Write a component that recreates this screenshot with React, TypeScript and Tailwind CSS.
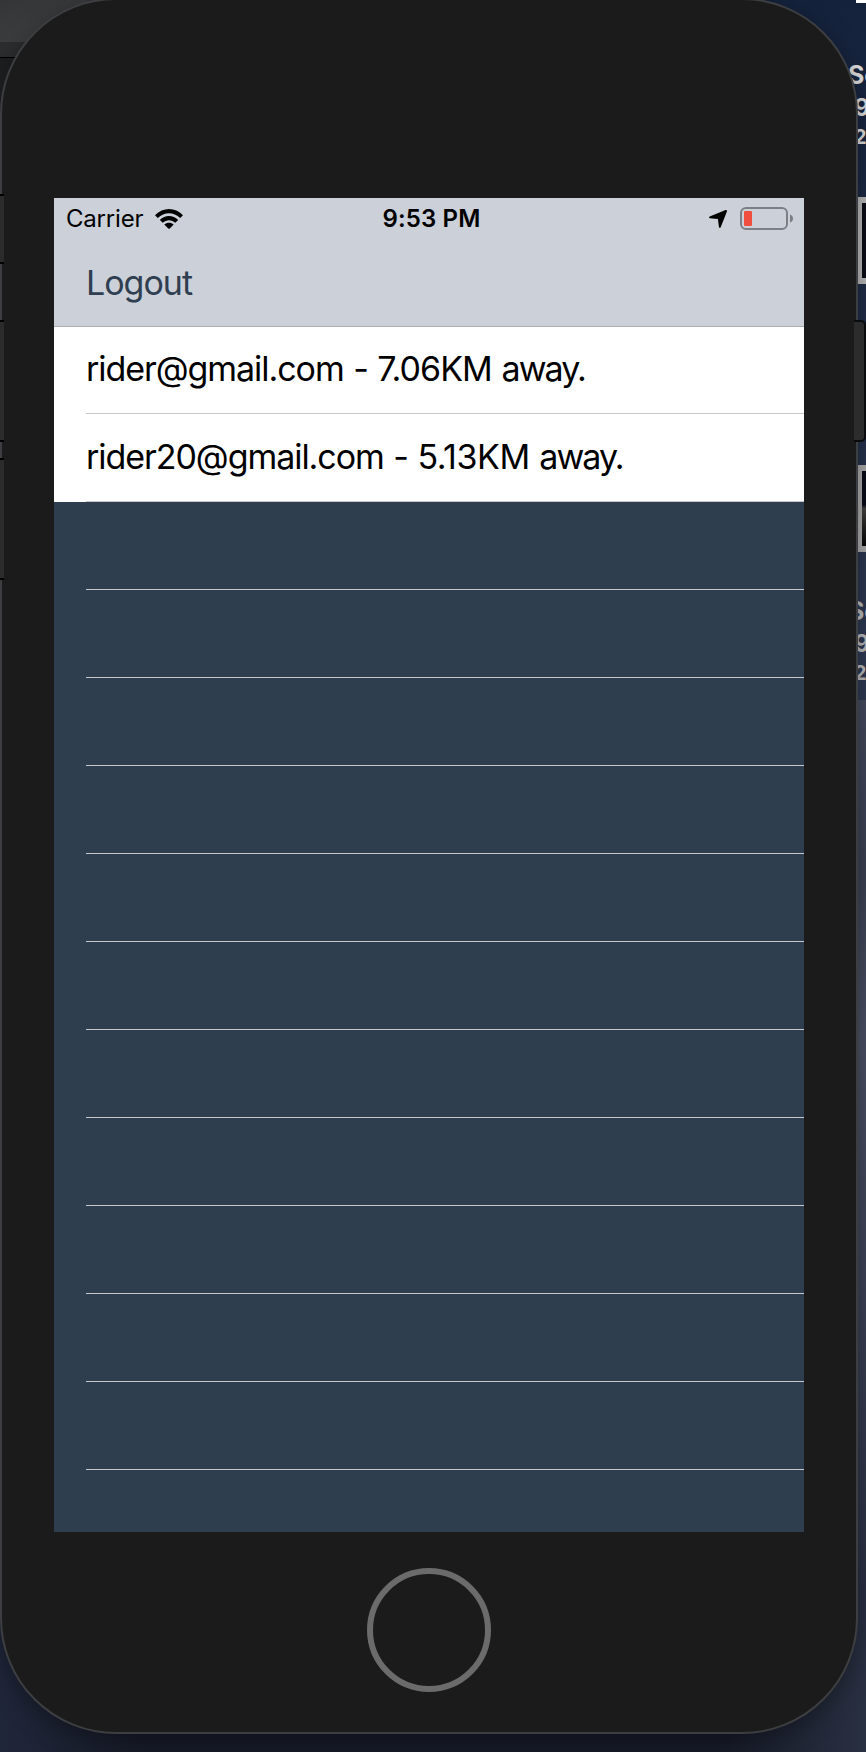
const riders = [
  { email: "rider@gmail.com", distance: "7.06KM", row: "h-[87px] leading-[84px]", tail: "tracking-[-0.9px]" },
  { email: "rider20@gmail.com", distance: "5.13KM", row: "h-[88px] leading-[86px]", tail: "tracking-[-0.45px]" },
];
const emptyRows = Array.from({ length: 11 }, (_, i) => i);

function DesktopFile({ tone }: { tone: string }) {
  return (
    <div className={`-ml-[4px] whitespace-nowrap font-bold ${tone}`}>
      <div className="text-[25px] leading-[33px]">Screen Shot</div>
      <div className="pl-[6px] text-[24px] leading-[31px]">9-53</div>
      <div className="pl-[6px] text-[20px] leading-[28px]">2018</div>
    </div>
  );
}

function Desktop() {
  return (
    <div className="absolute inset-0 flex justify-between overflow-hidden bg-[#171b28]">
      <div className="w-[140px] bg-linear-to-b from-[#2c3446] to-[#20263a]">
        <div className="h-[42px] bg-linear-to-br from-[#343536] to-[#434445]" />
        <div className="h-[15px] bg-[#2c2d2f]" />
        <div className="h-px bg-black" />
        <div className="h-[137px] bg-linear-to-b from-[#1c1e20] to-[#2c2c2c]" />
        <div className="h-[624px] bg-[#303030]" />
        <div className="h-[933px] bg-linear-to-r from-[#20263a] to-[#171b28]" />
      </div>
      <div className="flex w-[140px] flex-col overflow-hidden bg-linear-to-b from-[#14223c] from-0% via-[#2e3a53] via-38% to-[#252d3f] pl-[126px]">
        <div className="ml-[4px] h-[3px] shrink-0 bg-white" />
        <div className="h-[56px] shrink-0" />
        <DesktopFile tone="text-[#dcdcdc]" />
        <div className="mt-[46px] h-[87px] w-[40px] shrink-0 border-[6px] border-l-[10px] border-[#b8b7b7] bg-[#0b0d16]" />
        <div className="mt-[181px] h-[87px] w-[40px] shrink-0 border-[6px] border-l-[10px] border-[#aaa9a9] bg-linear-to-b from-[#080c18] from-45% via-[#43413f] via-50% to-[#070708]" />
        <div className="h-[43px] shrink-0" />
        <DesktopFile tone="text-[#b8b8ba]" />
        <div className="mt-[13px] h-[340px] shrink-0 bg-linear-to-b from-[#444a5d] via-[#3a4052] to-[#4b5164]" />
        <div className="h-[540px] shrink-0 bg-linear-to-b from-[#4b5164] to-[#293042]" />
        <div className="-ml-[126px] h-[172px] shrink-0 bg-linear-to-r from-[#171b28] to-[#293042]" />
      </div>
    </div>
  );
}

function StatusBar() {
  return (
    <div className="grid h-[42px] grid-cols-3 items-center text-[24px] leading-[42px] text-black">
      <div className="flex items-center gap-[11px] pl-[12px]">
        <span className="w-[78px] whitespace-nowrap tracking-[-0.2px]">Carrier</span>
        <svg width="28" height="20" viewBox="0 0 28 20" fill="black">
          <path d="M0 6.2C8-2 20-2 28 6.2L25.2 9C18.8 2.7 9.2 2.7 2.8 9Z" />
          <path d="M4.8 11C10 5.8 18 5.8 23.2 11L20.2 13.8C16.7 10.4 11.3 10.4 7.8 13.8Z" />
          <path d="M9.3 15.5C12 13 16 13 18.7 15.5L15 19.3Q14 20.3 13 19.3Z" />
        </svg>
      </div>
      <div className="whitespace-nowrap pl-[5px] text-center font-semibold tracking-[0.15px]">9:53 PM</div>
      <div className="flex items-center justify-end pr-[11px]">
        <svg width="18" height="18" viewBox="0 0 18 18" fill="black" className="mr-[13px]">
          <path d="M16.600 0Q18.300 -.2 17.900 1.400L11.700 17.200Q10.700 18.400 10 17.200L8.900 9.100L0.700 8.200Q-0.500 7.500 .7 6.600Z" />
        </svg>
        <svg width="53" height="24" viewBox="0 0 53 24">
          <rect x="1" y="1" width="46" height="21" rx="5" fill="none" stroke="#7c8085" strokeWidth="2" />
          <rect x="4" y="4" width="8" height="15" rx="1" fill="#f04f3f" />
          <path d="M50 7.500Q53 8.500 53 11.500Q53 14.500 50 15.500Z" fill="#7c8085" />
        </svg>
      </div>
    </div>
  );
}

function Screen() {
  return (
    <div className="h-[1334px] w-[750px] overflow-hidden bg-[#2f3e4e]">
      <header className="h-[129px] border-b border-[#aeafb3] bg-[#ccd0d8]">
        <StatusBar />
        <button className="ml-[32px] block h-[86px] text-[34px] leading-[82px] tracking-[-1px] text-[#2f3e50]">
          Logout
        </button>
      </header>
      <ul className="text-[34px] text-black">
        {riders.map((rider) => (
          <li key={rider.email} className={`bg-white pl-[32px] ${rider.row}`}>
            <div className="h-full whitespace-nowrap border-b border-[#c8c7cc] tracking-[-1.05px] [word-spacing:1px]">
              {rider.email} - <span className={rider.tail}>{rider.distance}</span>{" "}
              <span className="tracking-[-1.9px]">away.</span>
            </div>
          </li>
        ))}
        {emptyRows.map((row) => (
          <li key={row} className="ml-[32px] h-[88px] border-b border-[#c8c7cc]" />
        ))}
      </ul>
    </div>
  );
}

function SideButtons() {
  return (
    <>
      <div className="absolute inset-y-0 -left-[2px] flex w-[4px] flex-col pt-[194px]">
        <i className="mb-[56px] h-[70px] border-y-2 border-black bg-[#2c2c2c]" />
        <i className="mb-[16px] h-[122px] border-y-2 border-black bg-[#2c2c2c]" />
        <i className="h-[122px] border-y-2 border-black bg-[#2c2c2c]" />
      </div>
      <div className="absolute inset-y-0 -right-[10px] w-[12px] pt-[320px]">
        <i className="block h-[122px] rounded-r-[5px] border-y-2 border-r-2 border-[#0a0b0d] bg-[#2c2c2c]" />
      </div>
    </>
  );
}

export default function App() {
  return (
    <main className="relative h-[1752px] w-[866px] overflow-hidden font-['Inter',sans-serif]">
      <Desktop />
      <div className="relative -mt-[2px] flex h-[1736px] w-[858px] flex-col items-center rounded-[116px] border-2 border-[#3d3e41] bg-[#1b1b1b] pt-[198px] shadow-[0_6px_24px_rgba(0,0,0,0.35)]">
        <Screen />
        <div className="mt-[36px] h-[124px] w-[124px] rounded-full border-[6px] border-[#6b6b6b]" />
        <SideButtons />
      </div>
    </main>
  );
}
